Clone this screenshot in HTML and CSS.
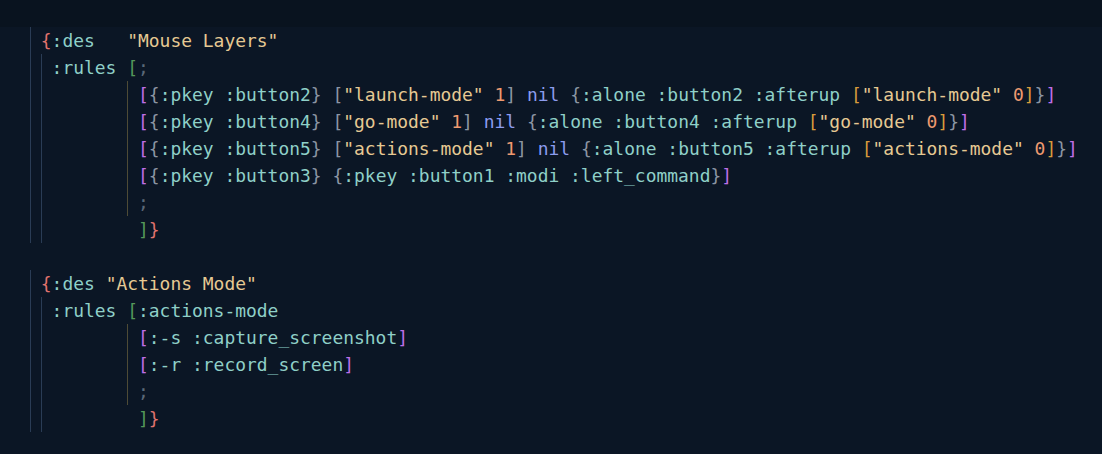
FILE: index.html
```html
<!DOCTYPE html>
<html>
<head>
<meta charset="utf-8">
<link rel="stylesheet" href="styles.css">
</head>
<body>
<div class="top"></div>
<div class="code">
<div class="ln"><span class="g"> </span><span class="b0">{</span><span class="k">:des</span>   <span class="s">"Mouse Layers"</span></div>
<div class="ln"><span class="g"> </span><span class="g"> </span><span class="k">:rules</span> <span class="b1">[</span><span class="c">;</span></div>
<div class="ln"><span class="g"> </span><span class="g"> </span>       <span class="g y"> </span><span class="b2">[</span><span class="b3">{</span><span class="k">:pkey :button2</span><span class="b3">}</span> <span class="b3">[</span><span class="s">"launch-mode"</span> <span class="n">1</span><span class="b3">]</span> <span class="nil">nil</span> <span class="b3">{</span><span class="k">:alone :button2 :afterup</span> <span class="b4">[</span><span class="s">"launch-mode"</span> <span class="n">0</span><span class="b4">]</span><span class="b3">}</span><span class="b2">]</span></div>
<div class="ln"><span class="g"> </span><span class="g"> </span>       <span class="g y"> </span><span class="b2">[</span><span class="b3">{</span><span class="k">:pkey :button4</span><span class="b3">}</span> <span class="b3">[</span><span class="s">"go-mode"</span> <span class="n">1</span><span class="b3">]</span> <span class="nil">nil</span> <span class="b3">{</span><span class="k">:alone :button4 :afterup</span> <span class="b4">[</span><span class="s">"go-mode"</span> <span class="n">0</span><span class="b4">]</span><span class="b3">}</span><span class="b2">]</span></div>
<div class="ln"><span class="g"> </span><span class="g"> </span>       <span class="g y"> </span><span class="b2">[</span><span class="b3">{</span><span class="k">:pkey :button5</span><span class="b3">}</span> <span class="b3">[</span><span class="s">"actions-mode"</span> <span class="n">1</span><span class="b3">]</span> <span class="nil">nil</span> <span class="b3">{</span><span class="k">:alone :button5 :afterup</span> <span class="b4">[</span><span class="s">"actions-mode"</span> <span class="n">0</span><span class="b4">]</span><span class="b3">}</span><span class="b2">]</span></div>
<div class="ln"><span class="g"> </span><span class="g"> </span>       <span class="g y"> </span><span class="b2">[</span><span class="b3">{</span><span class="k">:pkey :button3</span><span class="b3">}</span> <span class="b3">{</span><span class="k">:pkey :button1 :modi :left_command</span><span class="b3">}</span><span class="b2">]</span></div>
<div class="ln"><span class="g"> </span><span class="g"> </span>       <span class="g y"> </span><span class="c">;</span></div>
<div class="ln"><span class="g"> </span><span class="g"> </span>        <span class="b1">]</span><span class="b0">}</span></div>
<div class="ln"> </div>
<div class="ln"><span class="g"> </span><span class="b0">{</span><span class="k">:des</span> <span class="s">"Actions Mode"</span></div>
<div class="ln"><span class="g"> </span><span class="g"> </span><span class="k">:rules</span> <span class="b1">[</span><span class="k">:actions-mode</span></div>
<div class="ln"><span class="g"> </span><span class="g"> </span>       <span class="g y"> </span><span class="b2">[</span><span class="k">:-s :capture_screenshot</span><span class="b2">]</span></div>
<div class="ln"><span class="g"> </span><span class="g"> </span>       <span class="g y"> </span><span class="b2">[</span><span class="k">:-r :record_screen</span><span class="b2">]</span></div>
<div class="ln"><span class="g"> </span><span class="g"> </span>       <span class="g y"> </span><span class="c">;</span></div>
<div class="ln"><span class="g"> </span><span class="g"> </span>        <span class="b1">]</span><span class="b0">}</span></div>
</div>
</body>
</html>
```
FILE: styles.css
```css
html, body {
  margin: 0;
  padding: 0;
  background: #0b1625;
  width: 1102px;
  height: 454px;
  overflow: hidden;
}
.top {
  height: 27px;
  background: #09131f;
}
.code {
  padding-left: 30px;
  font-family: "DejaVu Sans Mono", monospace;
  font-size: 17.95px;
  color: #8fd0c8;
}
.ln {
  height: 27px;
  line-height: 27px;
  white-space: pre;
}
.g {
  display: inline-block;
  width: 1ch;
  height: 27px;
  vertical-align: top;
  box-shadow: inset 1px 0 0 #2a3c55;
}
.g.y {
  box-shadow: inset 1px 0 0 #4e4b36;
}
.k { color: #8fd0c8; }
.s { color: #e6c993; }
.n { color: #ee9a70; }
.nil { color: #8c9cee; }
.c { color: #5b6878; }
.b0 { color: #e0736e; }
.b1 { color: #55985a; }
.b2 { color: #bf6fe6; }
.b3 { color: #8b95a3; }
.b4 { color: #d89b3c; }
```
